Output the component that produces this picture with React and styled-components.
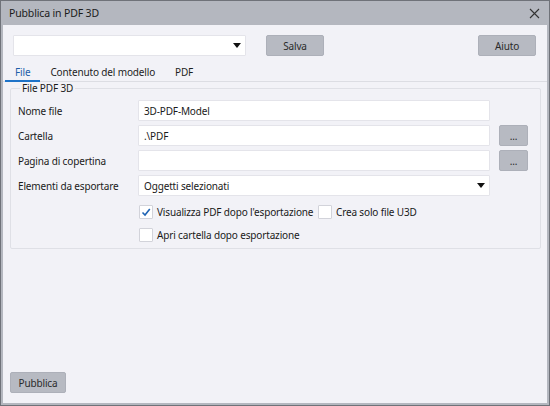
import React, { useState } from "react";
import styled, { createGlobalStyle } from "styled-components";

const Global = createGlobalStyle`
  html, body { margin: 0; padding: 0; }
  body {
    width: 550px;
    height: 406px;
    overflow: hidden;
    font-family: "Noto Sans", "Open Sans", sans-serif;
    font-size: 10px;
    letter-spacing: -0.15px;
    color: #1a1a1a;
  }
`;

const Window = styled.div`
  box-sizing: border-box;
  width: 550px;
  height: 406px;
  border: 1px solid #6f7279;
  background: #b4b7bf;
  padding: 0 2px 2px 2px;
  display: flex;
  flex-direction: column;
`;

const TitleBar = styled.div`
  height: 24px;
  display: flex;
  align-items: center;
  justify-content: space-between;
  padding: 0 6px 0 6px;
  font-size: 10.5px;
  color: #1b1b1b;
`;

const CloseBtn = styled.button`
  border: 0;
  background: transparent;
  padding: 0;
  width: 14px;
  height: 14px;
  display: flex;
  align-items: center;
  justify-content: center;
`;

const Body = styled.div`
  flex: 1;
  background: #f2f2f7;
  display: flex;
  flex-direction: column;
  padding: 10px 11px 10px 10px;
`;

const TopRow = styled.div`
  display: flex;
  align-items: center;
  height: 21px;
`;

const Select = styled.div`
  box-sizing: border-box;
  width: ${(p) => p.$w || "auto"};
  height: 21px;
  background: #fff;
  border: 1px solid #e4e4ea;
  border-radius: 1px;
  display: flex;
  align-items: center;
  justify-content: space-between;
  padding: 0 4px 0 5px;
  white-space: nowrap;
`;

const Arrow = styled.span`
  width: 0;
  height: 0;
  border-left: 4px solid transparent;
  border-right: 4px solid transparent;
  border-top: 5px solid #111;
`;

const Button = styled.button`
  box-sizing: border-box;
  width: ${(p) => p.$w};
  height: 21px;
  margin-left: ${(p) => p.$ml || "0"};
  background: #b7bac2;
  border: 1px solid #adb0b9;
  border-radius: 2px;
  font-family: inherit;
  font-size: 10px;
  letter-spacing: inherit;
  color: #2a2a2a;
  padding: 0;
  flex: none;
`;

const Spacer = styled.div`
  flex: 1;
`;

const Tabs = styled.div`
  display: flex;
  margin: 9px -11px 0 -10px;
  border-bottom: 1px solid #dcdde3;
  height: 16px;
  align-items: flex-end;
`;

const Tab = styled.div`
  padding: 0 10px 1px 10px;
  margin-left: ${(p) => p.$ml || "0"};
  color: ${(p) => (p.$active ? "#1f5fa8" : "#1e1e1e")};
  border-bottom: 2px solid ${(p) => (p.$active ? "#1e73c8" : "transparent")};
  margin-bottom: -1px;
  line-height: 13px;
`;

const Group = styled.fieldset`
  margin: 0 -5px 0 -3px;
  padding: 6px 11px 6px 7px;
  border: 1px solid #dfe0e6;
  border-radius: 2px;
`;

const Legend = styled.legend`
  padding: 0 2px;
  margin-left: 2px;
  line-height: 12px;
`;

const Rows = styled.div`
  display: flex;
  flex-direction: column;
  gap: 4px;
`;

const Row = styled.div`
  display: flex;
  align-items: center;
  height: 21px;
`;

const Label = styled.div`
  width: 120px;
  flex: none;
  white-space: nowrap;
`;

const Input = styled.input`
  box-sizing: border-box;
  width: 352px;
  height: 21px;
  background: #fff;
  border: 1px solid #e4e4ea;
  border-radius: 1px;
  font-family: inherit;
  font-size: 10px;
  letter-spacing: inherit;
  padding: 0 5px;
  color: #1a1a1a;
  outline: none;
`;

const Checks = styled.div`
  display: grid;
  grid-template-columns: 179px auto;
  row-gap: 9px;
  padding: 9px 0 0 121px;
`;

const CheckLabel = styled.label`
  display: flex;
  align-items: center;
  gap: 4px;
  height: 14px;
  white-space: nowrap;
`;

const Box = styled.span`
  box-sizing: border-box;
  width: 14px;
  height: 14px;
  flex: none;
  background: #fff;
  border: 1px solid #d2d3da;
  border-radius: 1px;
  display: flex;
  align-items: center;
  justify-content: center;
`;

const Footer = styled.div`
  margin-top: auto;
  display: flex;
  margin-left: -3px;
`;

function Check({ label, checked, onToggle }) {
  return (
    <CheckLabel onClick={onToggle}>
      <Box>
        {checked && (
          <svg width="10" height="10" viewBox="0 0 10 10">
            <path d="M1.5 5.5 L4 8 L8.8 2" fill="none" stroke="#1f64b4" strokeWidth="1.6" />
          </svg>
        )}
      </Box>
      {label}
    </CheckLabel>
  );
}

export default function App() {
  const [view, setView] = useState(true);
  const [u3d, setU3d] = useState(false);
  const [open, setOpen] = useState(false);

  return (
    <>
      <Global />
      <Window>
        <TitleBar>
          <span>Pubblica in PDF 3D</span>
          <CloseBtn>
            <svg width="11" height="11" viewBox="0 0 11 11">
              <path d="M1 1 L10 10 M10 1 L1 10" stroke="#333" strokeWidth="1.1" />
            </svg>
          </CloseBtn>
        </TitleBar>
        <Body>
          <TopRow>
            <Select $w="233px">
              <span />
              <Arrow />
            </Select>
            <Button $w="58px" $ml="20px">Salva</Button>
            <Spacer />
            <Button $w="58px">Aiuto</Button>
          </TopRow>
          <Tabs>
            <Tab $active $ml="2px">File</Tab>
            <Tab>Contenuto del modello</Tab>
            <Tab>PDF</Tab>
          </Tabs>
          <Group>
            <Legend>File PDF 3D</Legend>
            <Rows>
              <Row>
                <Label>Nome file</Label>
                <Input defaultValue="3D-PDF-Model" />
              </Row>
              <Row>
                <Label>Cartella</Label>
                <Input defaultValue=".\PDF" />
                <Button $w="29px" $ml="9px">...</Button>
              </Row>
              <Row>
                <Label>Pagina di copertina</Label>
                <Input defaultValue="" />
                <Button $w="29px" $ml="9px">...</Button>
              </Row>
              <Row>
                <Label>Elementi da esportare</Label>
                <Select $w="352px">
                  <span>Oggetti selezionati</span>
                  <Arrow />
                </Select>
              </Row>
            </Rows>
            <Checks>
              <Check label="Visualizza PDF dopo l'esportazione" checked={view} onToggle={() => setView(!view)} />
              <Check label="Crea solo file U3D" checked={u3d} onToggle={() => setU3d(!u3d)} />
              <Check label="Apri cartella dopo esportazione" checked={open} onToggle={() => setOpen(!open)} />
            </Checks>
          </Group>
          <Footer>
            <Button $w="56px">Pubblica</Button>
          </Footer>
        </Body>
      </Window>
    </>
  );
}
